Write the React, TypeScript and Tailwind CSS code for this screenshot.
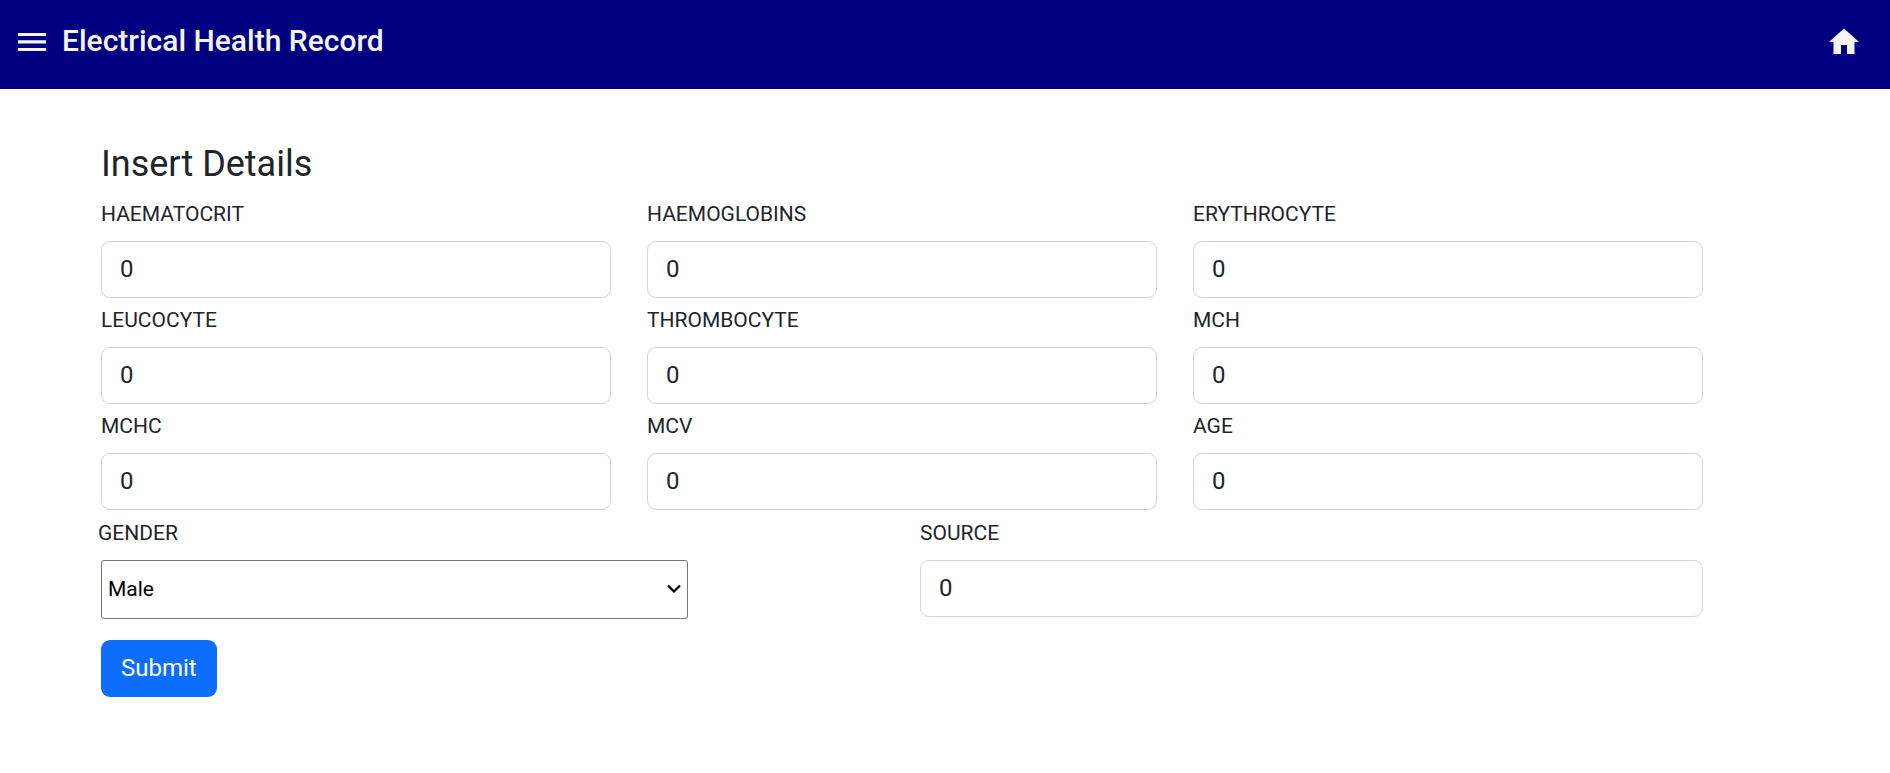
import React, { useState } from "react";

const measurements = [
  "HAEMATOCRIT",
  "HAEMOGLOBINS",
  "ERYTHROCYTE",
  "LEUCOCYTE",
  "THROMBOCYTE",
  "MCH",
  "MCHC",
  "MCV",
  "AGE",
];

const labelClass = "block pt-1.5 pb-[11px] text-[21px] leading-8 text-[#212529]";

function Field({ label }: { label: string }) {
  const [value, setValue] = useState("0");
  const id = label.toLowerCase();
  return (
    <div>
      <label htmlFor={id} className={labelClass}>
        {label}
      </label>
      <input
        id={id}
        type="text"
        inputMode="numeric"
        value={value}
        onChange={(e) => setValue(e.target.value)}
        className="block h-[57px] w-full rounded-[9px] border border-[#ced4da] bg-white px-[18px] pb-0.5 text-2xl text-[#212529]"
      />
    </div>
  );
}

function Header() {
  return (
    <header className="flex h-[89px] items-start justify-between bg-[#000080] pt-5 pr-7 pl-3.5 text-[#f5f5f5]">
      <div className="flex items-center gap-3">
        <button type="button" aria-label="Open menu" className="flex">
          <svg viewBox="0 0 36 36" className="size-9" fill="currentColor" aria-hidden="true">
            <path d="M4 10h28v3H4zM4 17.3h28v3.3H4zM4 25h28v3H4z" />
          </svg>
        </button>
        <h1 className="text-[30px] leading-[42px] font-medium">Electrical Health Record</h1>
      </div>
      <a href="#home" aria-label="Home" className="flex pt-1">
        <svg viewBox="0 0 24 24" className="size-9" fill="currentColor" aria-hidden="true">
          <path d="M10 20v-6h4v6h5v-8h3L12 3 2 12h3v8z" />
        </svg>
      </a>
    </header>
  );
}

export default function App() {
  const [gender, setGender] = useState("Male");
  return (
    <div className="min-h-screen bg-white font-['Roboto',sans-serif]">
      <Header />
      <main className="pt-[53px] pr-[187px] pb-12 pl-[101px]">
        <h2 className="pb-1.5 text-4xl leading-[44px] text-[#212529]">Insert Details</h2>
        <form onSubmit={(e) => e.preventDefault()}>
          <div className="grid grid-cols-3 gap-x-9">
            {measurements.map((label) => (
              <Field key={label} label={label} />
            ))}
          </div>
          <div className="grid grid-cols-2 gap-x-9 pt-px">
            <div>
              <label htmlFor="gender" className={`${labelClass} -ml-[3px]`}>
                GENDER
              </label>
              <div className="relative w-3/4">
                <select
                  id="gender"
                  value={gender}
                  onChange={(e) => setGender(e.target.value)}
                  className="block h-[59px] w-full appearance-none rounded-[3px] border border-[#767676] bg-white px-1.5 text-[21px] text-black"
                >
                  <option>Male</option>
                  <option>Female</option>
                </select>
                <svg
                  viewBox="0 0 14 9"
                  className="pointer-events-none absolute top-6 right-[7px] h-[9px] w-3.5"
                  fill="none"
                  stroke="black"
                  strokeWidth="2.2"
                  aria-hidden="true"
                >
                  <path d="M1 1.5l6 6 6-6" />
                </svg>
              </div>
            </div>
            <Field label="SOURCE" />
          </div>
          <button
            type="submit"
            className="mt-[21px] h-[57px] rounded-[9px] bg-[#0d6efd] px-5 pb-0.5 text-2xl text-white"
          >
            Submit
          </button>
        </form>
      </main>
    </div>
  );
}
